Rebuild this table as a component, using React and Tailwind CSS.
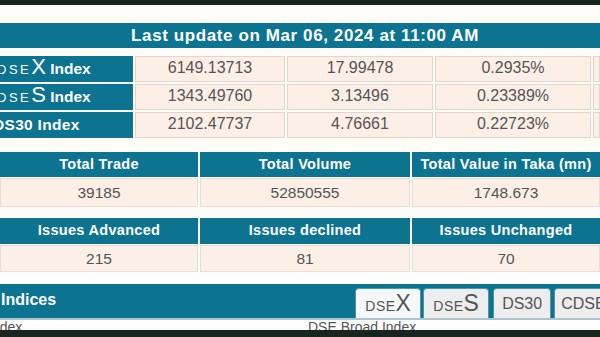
import React from "react";

const T = "bg-[#0c7391]";

function DseLabel({ big, sm = "text-[13px]", lg = "text-[22px]", tr = "tracking-[2.5px]" }) {
  return (
    <span className="inline-flex items-baseline">
      <span className={`${sm} ${tr} font-normal`}>DSE</span>
      <span className={`${lg} leading-none font-normal`}>{big}</span>
    </span>
  );
}

function IndexRow({ label, values, shift }) {
  const cell = "shrink-0 bg-[#fcefe6] border border-[#e2d6cc] flex items-center justify-center text-[16px] text-[#555] pb-[3px]";
  return (
    <div className="flex h-[26px] gap-[2px]">
      <div className={`w-[133px] shrink-0 ${T} flex items-end pb-[2px] text-white font-bold text-[15.5px] overflow-hidden`}>
        <span className={`${shift} whitespace-nowrap`}>{label}</span>
      </div>
      <div className={`w-[150px] ${cell}`}>{values[0]}</div>
      <div className={`w-[146px] ${cell}`}>{values[1]}</div>
      <div className={`w-[156px] ${cell}`}>{values[2]}</div>
      <div className="flex-1 bg-[#fcefe6] border border-[#e2d6cc]"></div>
    </div>
  );
}

function StatTable({ heads, vals, hh, vh }) {
  const widths = ["w-[198px]", "w-[210px]", "flex-1"];
  return (
    <div className="flex flex-col gap-[1px]">
      <div className={`flex gap-[2px] ${hh}`}>
        {heads.map((h, i) => (
          <div key={i} className={`${widths[i]} shrink-0 ${T} flex items-center justify-center text-white font-bold text-[14.5px] tracking-[0.3px] whitespace-nowrap`}>{h}</div>
        ))}
      </div>
      <div className={`flex gap-[2px] ${vh}`}>
        {vals.map((v, i) => (
          <div key={i} className={`${widths[i]} shrink-0 bg-[#fcefe6] border border-[#e8ddd4] flex items-center justify-center text-[15.5px] text-[#555]`}>{v}</div>
        ))}
      </div>
    </div>
  );
}

export default function App() {
  return (
    <div className="w-[600px] h-[337px] overflow-hidden bg-[#fdfcf6] font-['Liberation_Sans',Arial,sans-serif] flex flex-col">
      <div className="h-[5px] shrink-0 bg-[#16251e]"></div>
      <div className="h-[18px] shrink-0"></div>
      <div className={`h-[25px] shrink-0 ${T} flex items-center justify-center pl-[10px] text-white text-[17px] font-bold tracking-[0.6px]`}>
        Last update on Mar 06, 2024 at 11:00 AM
      </div>
      <div className="h-[8px] shrink-0"></div>
      <div className="flex flex-col gap-[2px] shrink-0">
        <IndexRow shift="-ml-[3px]" label={<><DseLabel big="X" /> Index</>} values={["6149.13713", "17.99478", "0.2935%"]} />
        <IndexRow shift="-ml-[3px]" label={<><DseLabel big="S" /> Index</>} values={["1343.49760", "3.13496", "0.23389%"]} />
        <IndexRow shift="-ml-[7px]" label={<span className="tracking-[0.3px]">DS30 Index</span>} values={["2102.47737", "4.76661", "0.22723%"]} />
      </div>
      <div className="h-[14px] shrink-0"></div>
      <StatTable hh="h-[25px]" vh="h-[29px]" heads={["Total Trade", "Total Volume", "Total Value in Taka (mn)"]} vals={["39185", "52850555", "1748.673"]} />
      <div className="h-[11px] shrink-0"></div>
      <StatTable hh="h-[26px]" vh="h-[27px]" heads={["Issues Advanced", "Issues declined", "Issues Unchanged"]} vals={["215", "81", "70"]} />
      <div className="h-[12px] shrink-0 bg-white"></div>
      <div className={`h-[34px] shrink-0 ${T} flex items-end`}>
        <div className="self-center pl-[1px] text-white font-bold text-[16px] -mt-[2px]">Indices</div>
        <div className="ml-[299px] flex items-end gap-[2px] h-[30px]">
          <div className="w-[66px] h-[30px] bg-[#f4f8f8] border border-[#4f95a8] border-b-0 rounded-t-[4px] flex items-center justify-center text-[#555] pt-[2px]">
            <DseLabel big="X" sm="text-[14px]" lg="text-[23px]" tr="tracking-[0.5px]" />
          </div>
          <div className="w-[66px] h-[30px] bg-[#ededed] border border-[#4f95a8] border-b-0 rounded-t-[4px] flex items-center justify-center text-[#555] pt-[2px]">
            <DseLabel big="S" sm="text-[14px]" lg="text-[23px]" tr="tracking-[0.5px]" />
          </div>
          <div className="ml-[2px] w-[58px] h-[30px] bg-[#ededed] border border-[#4f95a8] border-b-0 rounded-t-[4px] flex items-center justify-center text-[#555] text-[16px]">DS30</div>
          <div className="ml-[1px] w-[60px] h-[30px] bg-[#ededed] border border-[#4f95a8] border-b-0 rounded-tl-[4px] flex items-center pl-[6px] text-[#555] text-[16px] whitespace-nowrap">CDSE</div>
        </div>
      </div>
      <div className="h-[2px] shrink-0 bg-[#a9c6cf]"></div>
      <div className="h-[10px] shrink-0 bg-white overflow-hidden flex text-[14px] leading-[15px] text-[#555]">
        <span className="-ml-[12px] w-[320px] shrink-0">Index</span>
        <span className="">DSE Broad Index</span>
      </div>
      <div className="flex-1 bg-[#16251e]"></div>
    </div>
  );
}
